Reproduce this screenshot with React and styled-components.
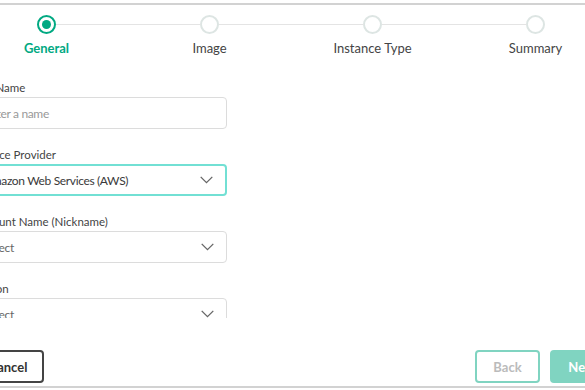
import React from "react";
import styled, { createGlobalStyle, css } from "styled-components";

const Global = createGlobalStyle`
  html, body { margin: 0; padding: 0; overflow: hidden; background: #fff; }
  body { font-family: Lato, "Noto Sans", sans-serif; color: #333; }
`;

const Frame = styled.div`
  width: 652px;
  height: 390px;
  margin-left: -35px;
  display: flex;
  flex-direction: column;
`;

const TopRule = styled.div`
  height: 2px;
  margin-top: 3px;
  background: #d2d2d2;
`;

const Stepper = styled.div`
  display: grid;
  grid-template-columns: repeat(4, 1fr);
  padding-top: 10px;
`;

const Step = styled.div`
  position: relative;
  display: flex;
  flex-direction: column;
  align-items: center;
  &::before, &::after {
    content: "";
    position: absolute;
    top: 9px;
    height: 1px;
    background: #e4e4e4;
  }
  &::before { left: 0; right: calc(50% + 9px); ${p => p.$first && css`display: none;`} }
  &::after { left: calc(50% + 9px); right: 0; ${p => p.$last && css`display: none;`} }
`;

const Dot = styled.div`
  box-sizing: border-box;
  width: 19px;
  height: 19px;
  border-radius: 50%;
  border: 2px solid ${p => (p.$active ? "#01a982" : "#dde5e3")};
  display: flex;
  align-items: center;
  justify-content: center;
  &::after {
    content: "";
    width: 9px;
    height: 9px;
    border-radius: 50%;
    background: #01a982;
    display: ${p => (p.$active ? "block" : "none")};
  }
`;

const StepLabel = styled.div`
  margin-top: 6px;
  font-size: 13px;
  line-height: 17px;
  font-weight: ${p => (p.$active ? 700 : 400)};
  color: ${p => (p.$active ? "#01a982" : "#444")};
`;

const Form = styled.div`
  height: 247px;
  margin-top: 14px;
  padding-left: 7px;
  overflow: hidden;
  display: flex;
  flex-direction: column;
  gap: 18px;
  padding-top: 9px;
  box-sizing: border-box;
`;

const Field = styled.div`
  display: flex;
  flex-direction: column;
  gap: 1px;
  width: 255px;
  flex-shrink: 0;
`;

const Label = styled.label`
  font-size: 11.5px;
  line-height: 16px;
  color: #444;
  padding-left: 2px;
`;

const Box = styled.div`
  box-sizing: border-box;
  height: 32px;
  border-radius: 4px;
  border: ${p => (p.$focus ? "2px solid #72e0d4" : "1px solid #dcdcdc")};
  padding: 0 12px 0 ${p => (p.$focus ? "10px" : "11px")};
  display: flex;
  align-items: center;
  justify-content: space-between;
  font-size: 12px;
  letter-spacing: -0.35px;
  color: ${p => (p.$placeholder ? "#999" : "#3a3a3a")};
  ${p => p.$muted && css`color: #666;`}
`;

const Chevron = () => (
  <svg width="13" height="8" viewBox="0 0 13 8" fill="none">
    <polyline points="0.7,0.9 6.5,6.7 12.3,0.9" stroke="#666" strokeWidth="1.3" />
  </svg>
);

const Footer = styled.div`
  margin-top: 32px;
  padding: 0 2px 0 7px;
  display: flex;
  justify-content: space-between;
  align-items: center;
`;

const Btn = styled.button`
  box-sizing: border-box;
  height: 33px;
  padding: 0 14px;
  border-radius: 4px;
  font-family: inherit;
  font-size: 13px;
  font-weight: 700;
  ${p => p.$variant === "cancel" && css`
    width: 72px;
    border: 2px solid #444;
    background: #fff;
    color: #333;
  `}
  ${p => p.$variant === "back" && css`
    width: 65px;
    border: 2px solid #80d4c1;
    background: #fff;
    color: #bbb;
  `}
  ${p => p.$variant === "next" && css`
    width: 65px;
    border: 2px solid #80d4c1;
    background: #80d4c1;
    color: #fff;
  `}
`;

const Right = styled.div`
  display: flex;
  gap: 10px;
`;

const BottomRule = styled.div`
  height: 2px;
  margin-top: 3px;
  background: #d2d2d2;
`;

const steps = ["General", "Image", "Instance Type", "Summary"];

export default function App() {
  return (
    <>
      <Global />
      <Frame>
        <TopRule />
        <Stepper>
          {steps.map((s, i) => (
            <Step key={s} $first={i === 0} $last={i === steps.length - 1}>
              <Dot $active={i === 0} />
              <StepLabel $active={i === 0}>{s}</StepLabel>
            </Step>
          ))}
        </Stepper>
        <Form>
          <Field>
            <Label>VM Name</Label>
            <Box $placeholder>Enter a name</Box>
          </Field>
          <Field>
            <Label>Service Provider</Label>
            <Box $focus>
              Amazon Web Services (AWS)
              <Chevron />
            </Box>
          </Field>
          <Field>
            <Label>Account Name (Nickname)</Label>
            <Box $muted>
              Select
              <Chevron />
            </Box>
          </Field>
          <Field>
            <Label>Region</Label>
            <Box $muted>
              Select
              <Chevron />
            </Box>
          </Field>
        </Form>
        <Footer>
          <Btn $variant="cancel">Cancel</Btn>
          <Right>
            <Btn $variant="back">Back</Btn>
            <Btn $variant="next">Next</Btn>
          </Right>
        </Footer>
        <BottomRule />
      </Frame>
    </>
  );
}
